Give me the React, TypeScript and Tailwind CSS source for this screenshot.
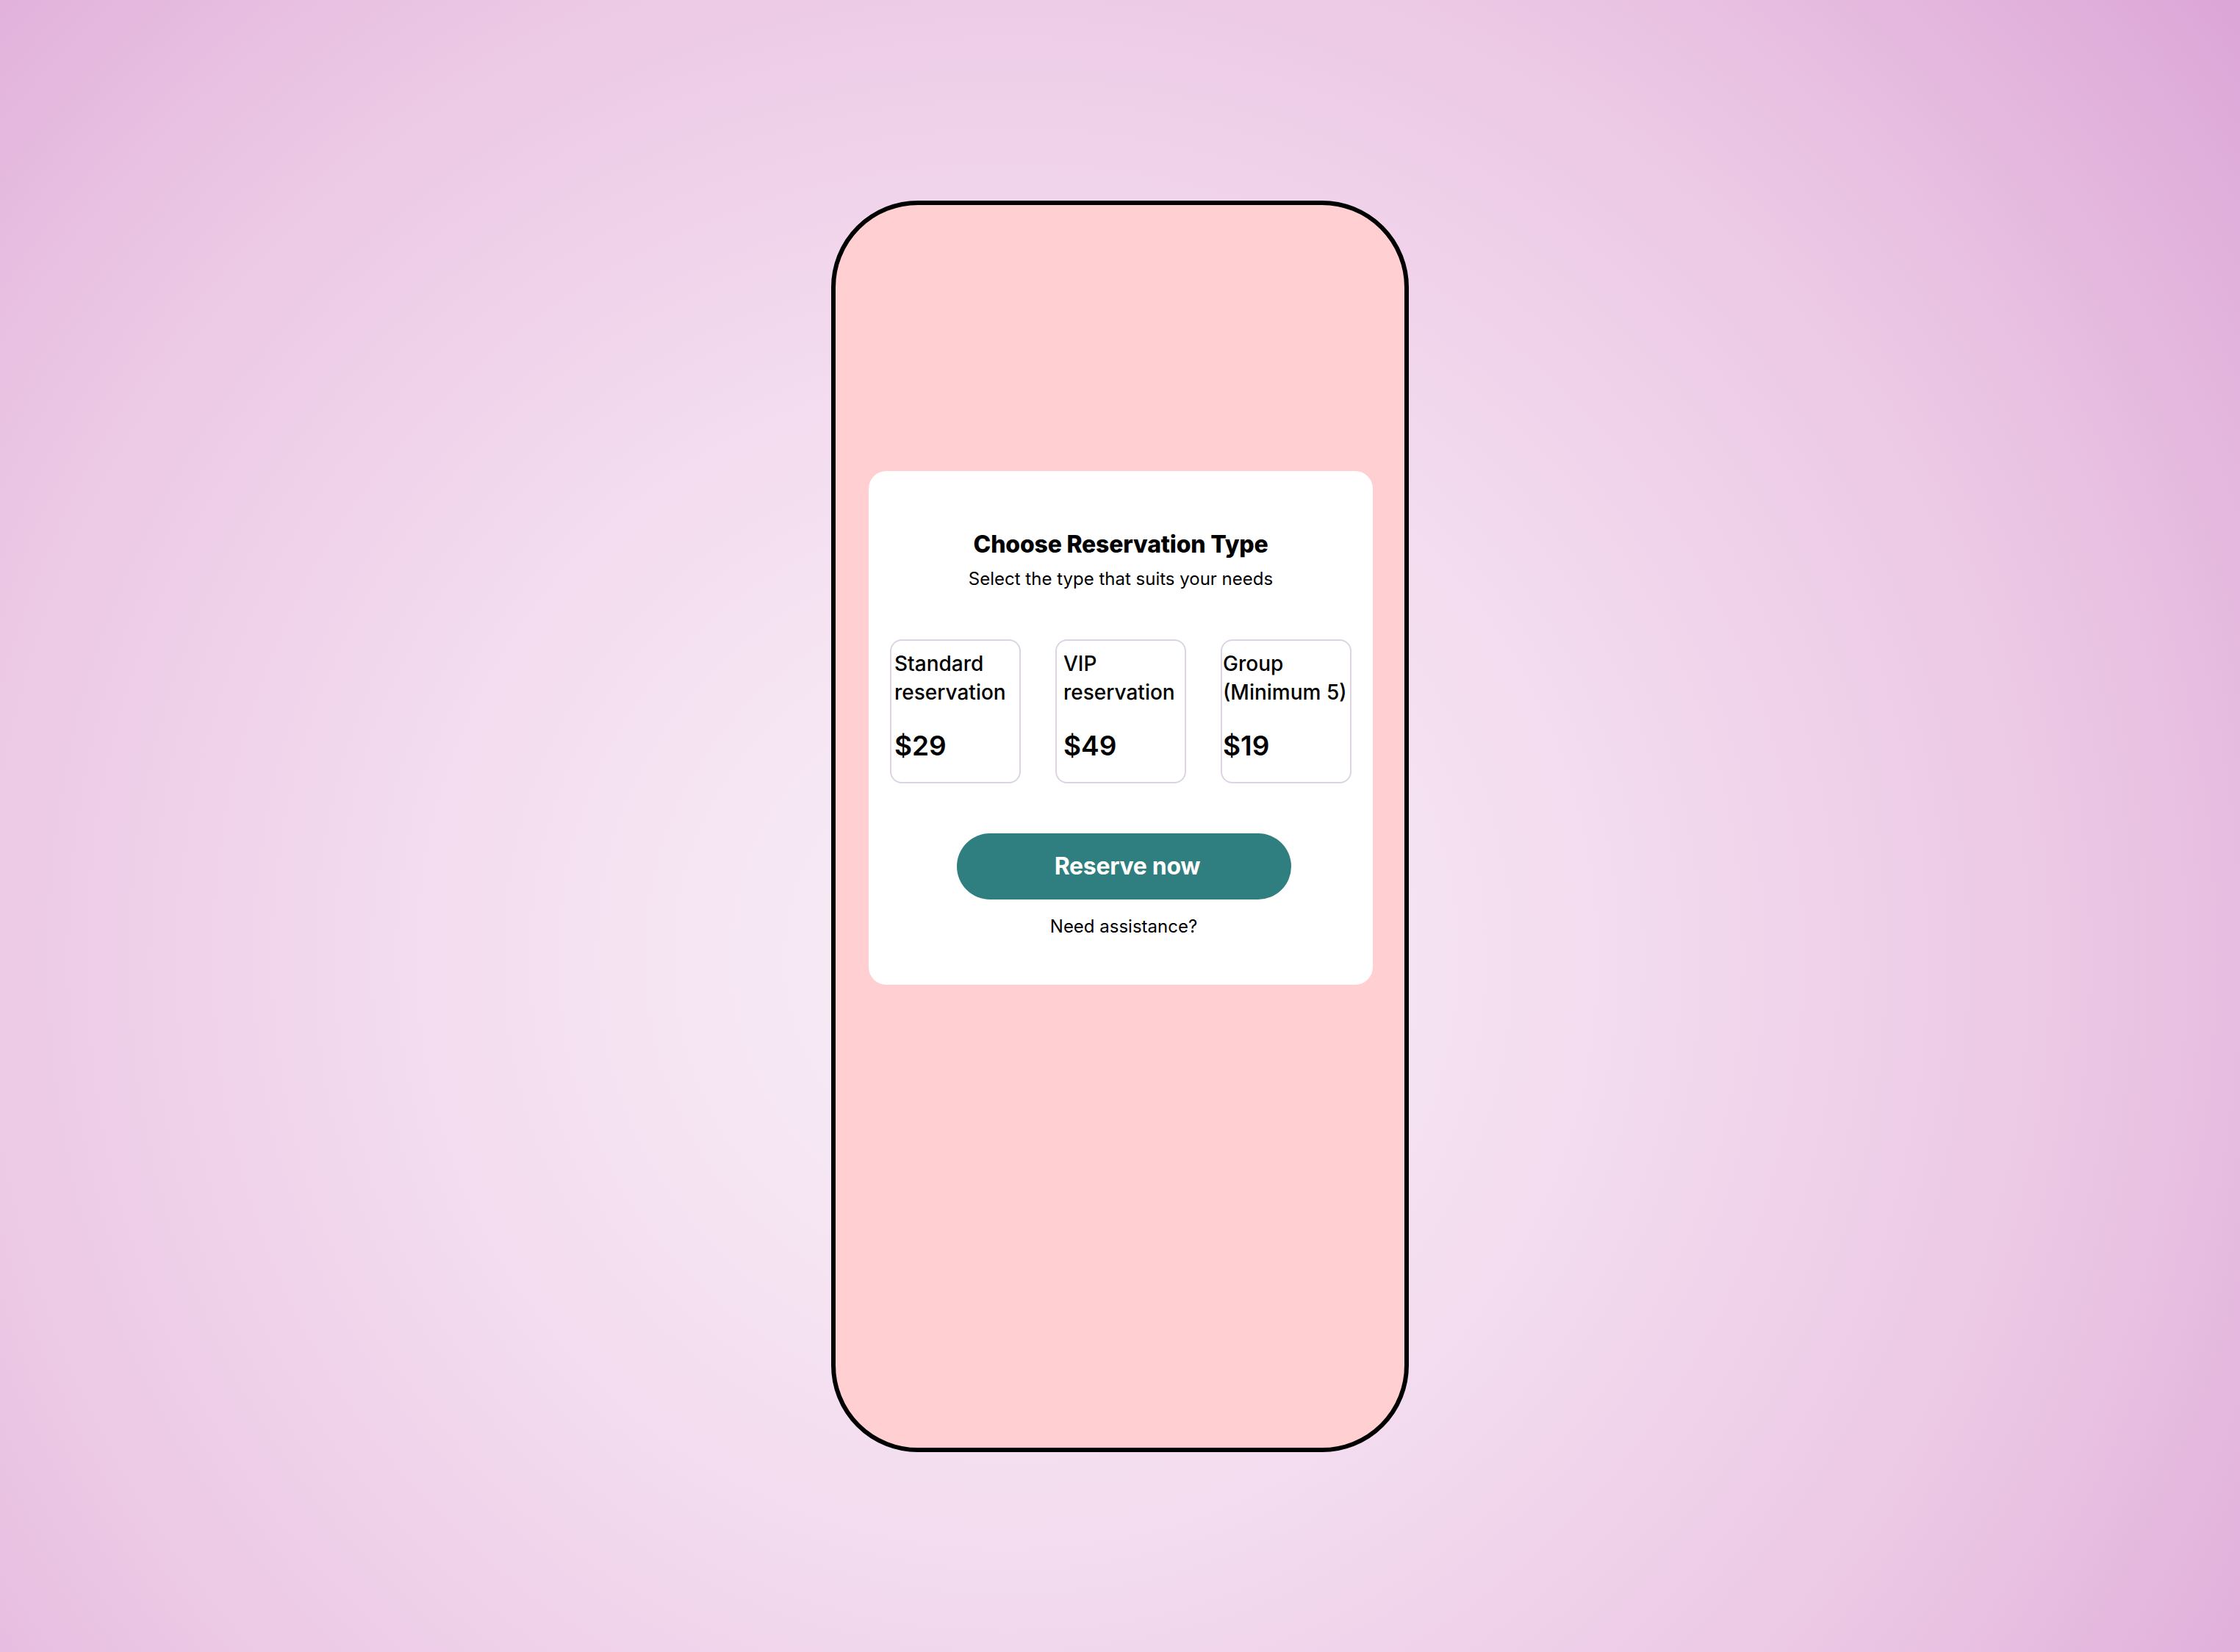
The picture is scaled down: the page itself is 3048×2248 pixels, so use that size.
const options = [
  { lines: ['Standard', 'reservation'], price: '$29', pad: 'pl-[4px]' },
  { lines: ['VIP', 'reservation'], price: '$49', pad: 'pl-[9px]' },
  { lines: ['Group', '(Minimum 5)'], price: '$19', pad: 'pl-[1px]' },
]

export default function App() {
  return (
    <div
      className="min-h-screen w-full flex items-center justify-center bg-[radial-gradient(circle_at_45%_58%,#f8eff7_0%,#f3dcef_38%,#ebc6e4_70%,#dca6d7_100%)]"
      style={{ fontFamily: 'Inter, "Noto Sans", sans-serif' }}
    >
      <div className="w-[786px] h-[1703px] border-[6px] border-black rounded-[118px] bg-[#ffcfd2] pt-[362px] pl-[45px] pr-[43px]">
        <div className="bg-white rounded-[24px] pt-[80px] pb-[63px] px-[29px] flex flex-col items-center">
          <h1 className="text-[32px] leading-[40px] font-extrabold text-black tracking-[-0.2px]">Choose Reservation Type</h1>
          <p className="mt-[11px] text-[24px] leading-[32px] text-black">Select the type that suits your needs</p>

          <div className="mt-[66px] w-full grid grid-cols-3 gap-[47px]">
            {options.map((o) => (
              <div
                key={o.price}
                className={`h-[196px] rounded-[16px] border-2 border-[#ddd3e2] ${o.pad} pt-[12px] flex flex-col`}
              >
                <div className="text-[28px] leading-[39px] font-medium text-black whitespace-nowrap">
                  {o.lines.map((l) => (
                    <div key={l}>{l}</div>
                  ))}
                </div>
                <div className="mt-auto mb-[27px] text-[37px] leading-[44px] font-semibold text-black">{o.price}</div>
              </div>
            ))}
          </div>

          <button className="mt-[68px] w-[455px] h-[90px] rounded-full bg-[#307f80] text-white text-[32px] font-bold tracking-[-0.3px] translate-x-[4px] pl-[10px]">
            Reserve now
          </button>
          <p className="mt-[21px] text-[24px] leading-[32px] text-black translate-x-[4px]">Need assistance?</p>
        </div>
      </div>
    </div>
  )
}
